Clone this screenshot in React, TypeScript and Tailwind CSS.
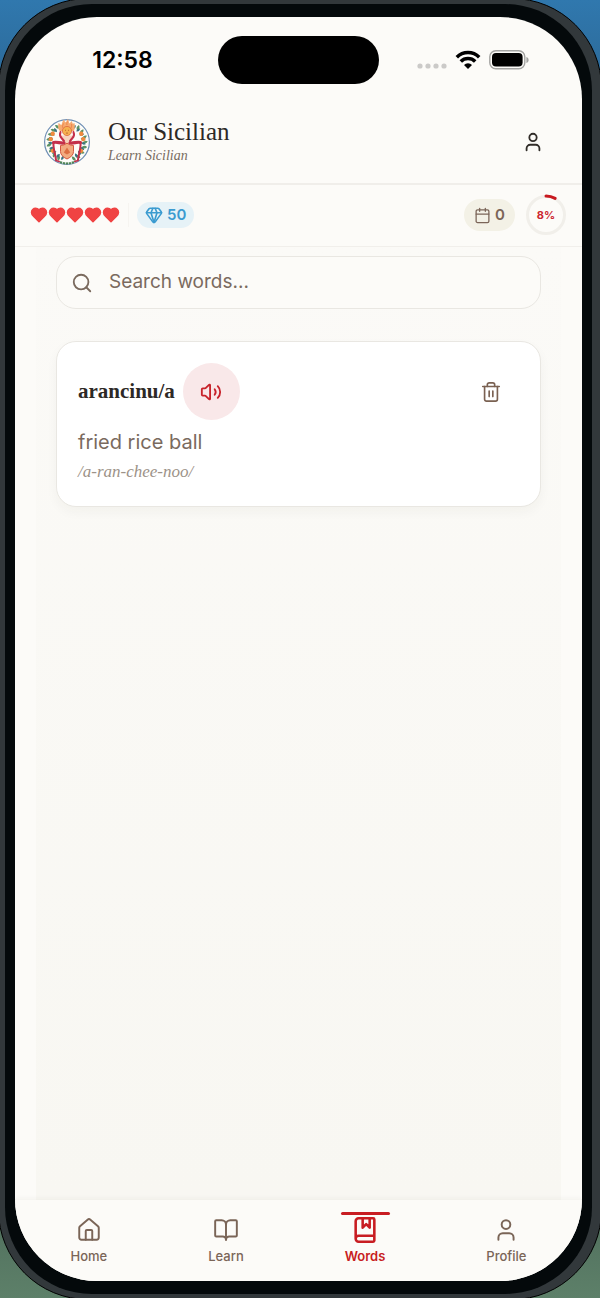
import { useState } from 'react';
import type { ReactNode } from 'react';
import { BookMarked, BookOpen, Calendar, Gem, House, Search, Trash2, User, Volume2 } from 'lucide-react';
import clsx from 'clsx';

const words = [{ term: 'arancinu/a', meaning: 'fried rice ball', sound: '/a-ran-chee-noo/' }];

const tabs = [
  { label: 'Home', Icon: House },
  { label: 'Learn', Icon: BookOpen },
  { label: 'Words', Icon: BookMarked },
  { label: 'Profile', Icon: User },
];

function StatusBar() {
  return (
    <div className="grid h-[86px] grid-cols-[1fr_161px_1fr] items-center text-black">
      <span className="pl-3 text-center font-['Inter',sans-serif] text-[23px] font-semibold">12:58</span>
      <div className="h-12 rounded-full bg-black" />
      <div className="flex items-center justify-center gap-2 pr-4">
        <svg width="30" height="18" viewBox="0 0 30 18" fill="#cbcac8">
          {[3, 11, 19, 27].map((x) => (
            <circle key={x} cx={x} cy="15" r="2.6" />
          ))}
        </svg>
        <svg width="26" height="20" viewBox="0 0 26 20" fill="none" stroke="#000" strokeWidth="3.5">
          <path d="M1.800 7.200a15.800 15.800 0 0 1 22.400 0" />
          <path d="M5.800 11.600a10.200 10.200 0 0 1 14.400 0" />
          <path d="M13 19 9 14.900a5.700 5.700 0 0 1 8 0Z" fill="#000" stroke="none" />
        </svg>
        <svg width="40" height="20" viewBox="0 0 40 20">
          <rect x="0.8" y="0.8" width="35" height="18" rx="6" fill="none" stroke="#a3a3a1" strokeWidth="1.4" />
          <rect x="3" y="3" width="30.6" height="13.6" rx="4" />
          <path d="M37.4 7v6c1.6-.6 2.2-1.700 2.200-3s-.6-2.400-2.200-3Z" fill="#a3a3a1" />
        </svg>
      </div>
    </div>
  );
}

// Trinacria crest: three-legged figure inside a citrus wreath
function Crest() {
  const leaves = [205, 222, 240, 258, 276, 292, 308, 325, 35, 52, 72, 88, 104, 122, 140, 155];
  const fruits = [238, 280, 300, 60, 80, 122];
  return (
    <svg width="48" height="48" viewBox="0 0 48 48" fill="none" aria-hidden="true">
      <circle cx="24" cy="24" r="22.4" fill="#fdfcf8" stroke="#6f8fb5" strokeWidth="1.2" />
      {leaves.map((a) => (
        <g key={a} transform={`rotate(${a} 24 24)`}>
          <path d="M24 3.200q3.400 1.600 1.800 5.600q-3.600-1.800-1.800-5.600Z" fill="#5c9163" />
          <path d="M21.600 5.200q-2.600 2-.4 5q2.600-2 .4-5Z" fill="#3b7482" />
        </g>
      ))}
      {fruits.map((a) => (
        <circle key={a} cx="24" cy="7.500" r="2.200" fill="#f08a3c" transform={`rotate(${a} 24 24)`} />
      ))}
      <path d="M17 13c-3-3-1.500-6-1.500-8 2 1 2 2 3 2 .5-2 1-4 2.500-5.500.5 2 1 2.500 2 3 .5-1.500 1-2.500 2-3.500 1 2 .8 3.500 1.500 4.500 1-1 1.500-2 2.500-2.500.3 2 .3 3.500 2.500 2 .5 3 .5 5-.5 8Z" fill="#f6aa70" />
      <path d="M20 10c-1-2 0-3 .5-4.500M24 7c-.500-1.500 0-2 .5-3.500M28 10c1-2 .5-3 .5-4" stroke="#e9793f" strokeWidth="0.800" />
      <path d="M18.500 17.500h11L28 26h-8Z" fill="#f7d3bd" />
      <circle cx="24" cy="13" r="4.600" fill="#f5b04f" stroke="#dd6a3c" strokeWidth="0.8" />
      <path d="M22 12.300h1m2 0h1m-3 2.800h2" stroke="#a94b2a" strokeWidth="0.7" />
      <g stroke="#c4304a" strokeLinecap="round" strokeLinejoin="round">
        <path d="M17.500 14c-1 2.500-.5 4.500 1 6l2.500 3M30.500 14c1 2.500.5 4.500-1 6L27 23" strokeWidth="2" />
        <path d="M21 25c-4 .5-7-1.500-10.500-.5M27 25c4 .5 7-1.500 10.500-.5" strokeWidth="3.200" />
        <path d="M10.500 25c-.500 6 2 11 2.500 17M37.500 25c.5 6-2 11-2.500 17" strokeWidth="2" />
        <path d="M13 42.500l3.200 1M35 42.500l-3.200 1" strokeWidth="1.600" />
      </g>
      <path d="M17.500 27.500q3.500 0 6.500-2.300 3 2.300 6.500 2.300v6q0 4.500-6.500 7.500-6.500-3-6.500-7.500Z" fill="#f2ab80" stroke="#d4573f" strokeWidth="1" />
      <path d="M20.800 34.500 24 29.500l3.200 5L24 36.500Z" fill="#dd6f42" />
      <path d="M17 44q7 3 14 0" stroke="#4f8556" strokeWidth="2.200" strokeDasharray="2.200 .8" />
    </svg>
  );
}

function Heart() {
  return (
    <svg width="18" height="18" viewBox="0 0 24 24" fill="#f04343" stroke="#f04343" strokeWidth="2" strokeLinejoin="round">
      <path d="M19 14c1.49-1.46 3-3.21 3-5.5A5.5 5.5 0 0 0 16.5 3c-1.76 0-3 .5-4.5 2-1.5-1.5-2.74-2-4.5-2A5.5 5.5 0 0 0 2 8.5c0 2.300 1.500 4.050 3 5.500l7 7Z" />
    </svg>
  );
}

function GoalRing({ percent }: { percent: number }) {
  const length = 2 * Math.PI * 19;
  return (
    <div className="grid size-[42px] place-items-center">
      <svg className="col-start-1 row-start-1" width="42" height="42" viewBox="0 0 42 42" fill="none">
        <circle cx="21" cy="21" r="18.500" stroke="#f1efea" strokeWidth="3" />
        <circle
          cx="21"
          cy="21"
          r="19"
          stroke="#c8191f"
          strokeWidth="3"
          strokeLinecap="round"
          strokeDasharray={`${(length * percent) / 100} ${length}`}
          transform="rotate(-90 21 21)"
        />
      </svg>
      <span className="col-start-1 row-start-1 text-[11px] font-bold text-[#cc2630]">{percent}%</span>
    </div>
  );
}

function Pill({ className, children }: { className: string; children: ReactNode }) {
  return <div className={clsx('flex items-center rounded-full text-[15px] font-semibold', className)}>{children}</div>;
}

export default function App() {
  const [query, setQuery] = useState('');
  const [active, setActive] = useState('Words');

  const shown = words.filter((w) => `${w.term} ${w.meaning}`.toLowerCase().includes(query.toLowerCase()));

  return (
    <div className="flex min-h-screen overflow-hidden bg-linear-to-b from-[#3078ae] via-[#0b1116] to-[#5d8069] font-['Inter',sans-serif]">
      {/* Phone body */}
      <div className="-m-[2px] flex flex-1 rounded-[90px] border border-black bg-[#32383b] py-[5px] pr-[9px] pl-[6px]">
        <div className="flex flex-1 rounded-[87px] bg-[#04090b] px-[10px] py-[13px]">
          <div className="flex flex-1 flex-col overflow-hidden rounded-[82px] bg-[#fcfbf8]">
            <StatusBar />

            <header className="flex h-[82px] items-center gap-[17px] border-b-2 border-[#f0eeea] pr-[38px] pb-[3px] pl-7">
              <Crest />
              <div className="flex-1 font-['Liberation_Serif',serif]">
                <h1 className="text-[25px] leading-7 text-[#2d2926]">Our Sicilian</h1>
                <p className="text-[14px] leading-5 text-[#786b5f] italic">Learn Sicilian</p>
              </div>
              <button aria-label="Account" className="text-[#322e2a]">
                <User size={22} />
              </button>
            </header>

            <div className="flex h-[62px] items-center border-b border-[#f1efeb] px-[15px] pb-px">
              <div className="flex">
                {[1, 2, 3, 4, 5].map((n) => (
                  <Heart key={n} />
                ))}
              </div>
              <div className="mx-2 h-6 w-px bg-[#f6f4f0]" />
              <Pill className="h-[26px] gap-1 bg-[#e6f2f7] px-2 text-[#3b9bd0]">
                <Gem size={18} strokeWidth={2.2} />
                50
              </Pill>
              <Pill className="mr-[10px] ml-auto h-8 gap-1 bg-[#f3f1e6] px-[10px] text-[#7b6558]">
                <Calendar size={17} strokeWidth={1.8} />
                0
              </Pill>
              <GoalRing percent={8} />
            </div>

            <main className="mx-[21px] flex-1 bg-linear-to-b from-[#fbfaf7] to-[#f8f7f2] px-5 pt-[9px]">
              <label className="flex h-[53px] items-center gap-4 rounded-[20px] border border-[#e9e7e2] bg-[#fcfbf8] px-[14px] text-[#7a6a5e]">
                <Search size={22} />
                <input
                  aria-label="Search words"
                  value={query}
                  onChange={(e) => setQuery(e.target.value)}
                  placeholder="Search words..."
                  className="min-w-0 flex-1 bg-transparent text-[19px] outline-none placeholder:text-[#7a6a5e]"
                />
              </label>

              <ul className="mt-8 flex flex-col gap-4">
                {shown.map((word) => (
                  <li
                    key={word.term}
                    className="rounded-[20px] border border-[#e9e7e2] bg-white px-[21px] pt-[21px] pb-[22px] shadow-[0_5px_12px_rgba(60,50,30,0.04)]"
                  >
                    <div className="flex items-center">
                      <h2 className="font-['Liberation_Serif',serif] text-[21px] font-bold text-[#2d2926]">{word.term}</h2>
                      <button
                        aria-label="Listen"
                        className="ml-2 grid size-[57px] place-items-center rounded-full bg-[#f9e8e9] text-[#c8232b]"
                      >
                        <Volume2 size={22} />
                      </button>
                      <button aria-label="Delete word" className="mr-[17px] ml-auto text-[#7a6152]">
                        <Trash2 size={22} strokeWidth={1.8} />
                      </button>
                    </div>
                    <p className="mt-1 text-[20px] leading-9 text-[#7a6a5e]">{word.meaning}</p>
                    <p className="font-['Liberation_Serif',serif] text-[17px] leading-6 text-[#9c9288] italic">{word.sound}</p>
                  </li>
                ))}
              </ul>
            </main>

            <nav className="flex h-[81px] justify-around bg-[#fcfbf8] px-[5px] pt-3 shadow-[0_-2px_4px_rgba(60,50,30,0.04)]">
              {tabs.map(({ label, Icon }) => {
                const on = label === active;
                return (
                  <button
                    key={label}
                    onClick={() => setActive(label)}
                    aria-current={on ? 'page' : undefined}
                    className={clsx('relative flex flex-col items-center', on ? 'text-[#c81d22]' : 'text-[#7a6557]')}
                  >
                    {on && <span className="absolute top-0 h-[3px] w-[49px] rounded-full bg-[#c81d22]" />}
                    <span className="grid h-9 place-items-center">
                      <Icon size={on ? 28 : 26} strokeWidth={on ? 2.2 : 1.8} />
                    </span>
                    <span className={clsx('text-[13px] leading-4', on ? 'font-semibold' : 'font-medium')}>{label}</span>
                  </button>
                );
              })}
            </nav>
          </div>
        </div>
      </div>
    </div>
  );
}
